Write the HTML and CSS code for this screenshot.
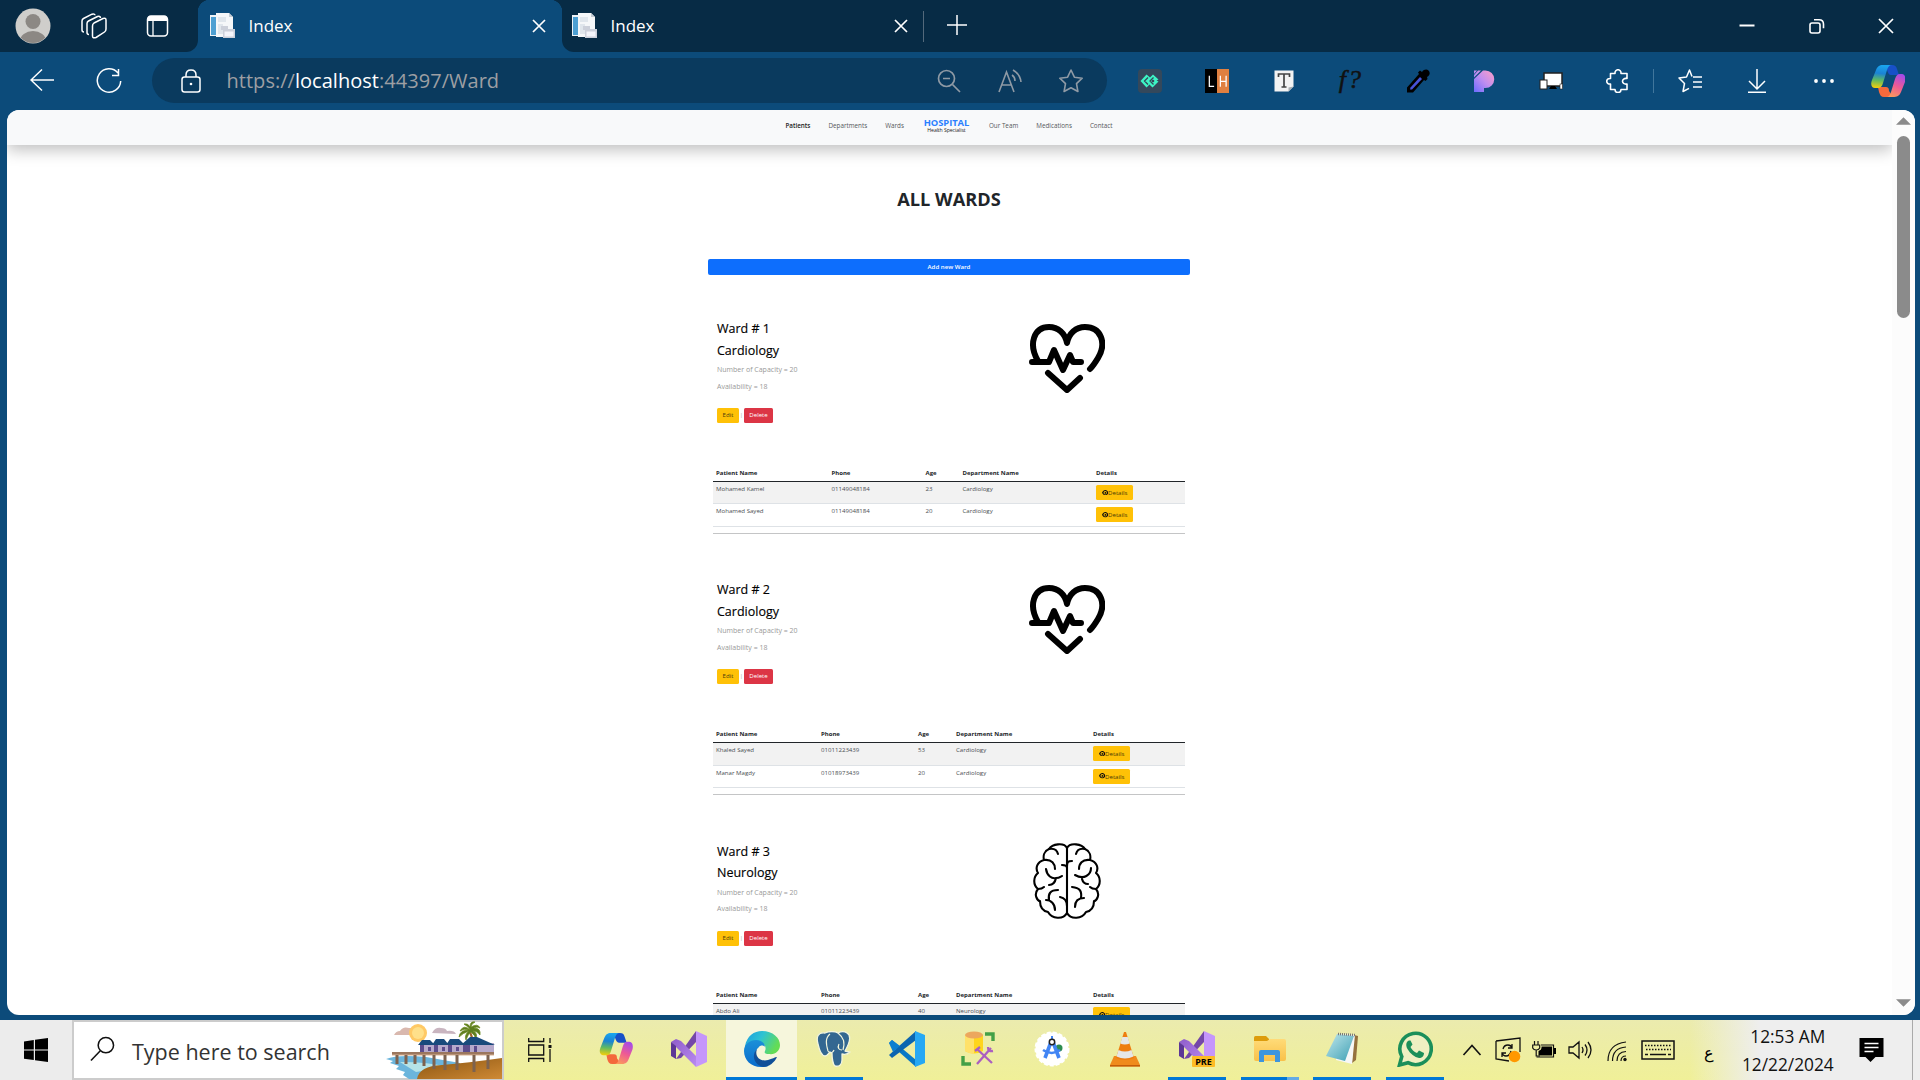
FILE: index.html
```html
<!DOCTYPE html>
<html lang="en">
<head>
<meta charset="utf-8">
<title>Index</title>
<link rel="stylesheet" href="styles.css">
</head>
<body>
<svg class="defs" width="0" height="0">
  <defs>
    <linearGradient id="g-cop1" x1="0.3" y1="0" x2="0.2" y2="1"><stop offset="0" stop-color="#1aa5ee"/><stop offset=".35" stop-color="#1b83d4"/><stop offset=".65" stop-color="#5fba62"/><stop offset="1" stop-color="#f7d008"/></linearGradient>
    <linearGradient id="g-cop2" x1="0.7" y1="0" x2="0.3" y2="1"><stop offset="0" stop-color="#a64be8"/><stop offset=".5" stop-color="#ee5a94"/><stop offset="1" stop-color="#fb9a5c"/></linearGradient>
    <linearGradient id="g-edge1" x1="0" y1="0" x2="1" y2=".4"><stop offset="0" stop-color="#1b9de0"/><stop offset=".5" stop-color="#2fc3d2"/><stop offset="1" stop-color="#64dc55"/></linearGradient>
    <linearGradient id="g-edge2" x1="0" y1="0" x2="0" y2="1"><stop offset="0" stop-color="#1b90d8"/><stop offset="1" stop-color="#0a6ccc"/></linearGradient>
    <linearGradient id="g-pik" x1="1" y1="0" x2="0" y2="1"><stop offset="0" stop-color="#ff9fc4"/><stop offset=".5" stop-color="#c08ef0"/><stop offset="1" stop-color="#6c6cff"/></linearGradient>
    <linearGradient id="g-note" x1="0" y1="0" x2="1" y2="1"><stop offset="0" stop-color="#c2e8ec"/><stop offset="1" stop-color="#3c9fb4"/></linearGradient>
    <linearGradient id="g-folder" x1="0" y1="0" x2="0" y2="1"><stop offset="0" stop-color="#ffdb78"/><stop offset="1" stop-color="#f9c14a"/></linearGradient>
    <linearGradient id="g-sand" x1="0" y1="0" x2="1" y2="1"><stop offset="0" stop-color="#8a5410"/><stop offset="1" stop-color="#cf8a35"/></linearGradient>
    <linearGradient id="g-vs" x1="0" y1="0" x2="1" y2="1"><stop offset="0" stop-color="#8e5cc9"/><stop offset="1" stop-color="#b98af0"/></linearGradient>
    <symbol id="favicon" viewBox="0 0 26 26">
      <path d="M1 2h9v21H1z" fill="#eef3f7"/><path d="M2 4h5v18H2z" fill="#4d9fd2"/>
      <path d="M7 0h13l4 4v20H7z" fill="#f5f7f9"/><path d="M20 0v4h4z" fill="#c4ccd4"/>
      <path d="M9 4h8v5H9zM9 11h5v10H9z" fill="#e0e6ec"/>
      <path d="M12 13h7v4h-7zM14 16h12v9H14z" fill="#ccd0da"/><path d="M15.500 18.500h9v5h-9z" fill="#f4f5fb"/>
    </symbol>
    <symbol id="x" viewBox="0 0 14 14"><path d="M1 1l12 12M13 1L1 13" stroke="#fff" stroke-width="1.700" fill="none"/></symbol>
    <symbol id="copilot" viewBox="0 0 34 32">
      <path d="M12 0h9c3 0 4 1 5 4l2 6h-8c-2 0-3-2-4-5z" fill="#1850c8"/>
      <path d="M22 32h-9c-3 0-4-2-5-5l-1-5h8c2 0 3 1 3 4z" fill="#f4693c"/>
      <path d="M12 0h9c-3 0-4 2-5 5l-4 13c-1 4-3 5-5 5H4c-3 0-5-3-3-8l4-10C6.500 1.500 8 0 12 0z" fill="url(#g-cop1)"/>
      <path d="M22 32h-7c3 0 4-2 5-5l4-13c1-3 2-5 5-5h2c3 0 4 4 3 8l-4 10c-1.500 4-4 5-8 5z" fill="url(#g-cop2)"/>
    </symbol>
    <symbol id="vs" viewBox="0 0 36 36">
      <path d="M5 28L25 0v11L10 27z" fill="#7447a8"/>
      <path d="M0 11l5-3 5 2 15 15v11l-9-9z" fill="url(#g-vs)"/>
      <path d="M0 11v14l5 3V15z" fill="#5d3796"/>
      <path d="M25 0l11 5v26l-11 5z" fill="#c596fb"/>
    </symbol>
    <symbol id="heart" viewBox="0 0 76 69">
      <g fill="none" stroke="#000" stroke-width="6" stroke-linecap="round" stroke-linejoin="round">
        <path d="M9 37C-1 20 5 3 20 3c9 0 16 6 18 16C40 9 47 3 56 3c16 0 22 16 13 31-3 5-5 8-8 11"/>
        <path d="M3 38h17l5-12 9 20 7-15 3 7h8"/><path d="M19 49l19 17 13-12"/>
      </g>
    </symbol>
    <symbol id="brain" viewBox="0 0 68 76">
      <g fill="none" stroke="#000" stroke-width="2.100" stroke-linecap="round" stroke-linejoin="round">
        <path d="M34 4v66"/>
        <g id="lobe"><path d="M34 5C31-1 19 1 16 6c-5 2-6 7-5 11C4 19 2 25 5 30c-5 4-5 12 0 16-5 6 0 12 2 12 0 6 3 10 8 11 4 7 15 8 19 1"/>
        <path d="M16 6c5-1 8 1 9 5M11 17c8-1 11 4 11 9M5 46c3 0 5-1 6-2"/></g>
        <use href="#lobe" transform="matrix(-1 0 0 1 68 0)"/>
        <path d="M13 26c1 7 6 10 10 9 4 0 5-2 6-2M23 35c-1 5-3 7-7 7M29 22c3 0 5 1 5 3M25 47c-8 0-10 4-9 10M13 57c5 0 9 4 9 10M27 54c5 1 7 5 7 9"/>
        <path d="M34 23c0-4 1-5 5-5M42 32c9 5 16 0 16-7M49 36c1 4 3 5 6 5M39 44c8 1 10 4 9 11M51 55c-6 0-9 3-9 9"/>
      </g>
    </symbol>
    <symbol id="eye" viewBox="0 0 12 10"><path d="M0 5C3-1.500 9-1.500 12 5 9 11.500 3 11.500 0 5z" fill="#111"/><circle cx="6" cy="5" r="3.200" fill="#ffc107"/><circle cx="6.300" cy="5.300" r="1.700" fill="#111"/></symbol>
  </defs>
</svg>

<div class="screen">
  <header class="tabstrip">
    <div class="strip-left">
      <svg class="ic-user" viewBox="0 0 36 36"><clipPath id="uc"><circle cx="18" cy="18" r="17"/></clipPath><circle cx="18" cy="18" r="17.500" fill="#cfcecb"/><g fill="#8c8884" clip-path="url(#uc)"><circle cx="18" cy="13.500" r="7.500"/><ellipse cx="18" cy="33" rx="13" ry="10"/></g></svg>
      <svg class="ic-work" viewBox="0 0 26 26" fill="none" stroke="#fff" stroke-width="1.500" stroke-linejoin="round"><path d="M13 10l9-4.500q3-1 3 1.500v9q0 2-1.500 3L15 24.500q-3.500 1.200-3.500-1.500V13q0-2 1.500-3z"/><path d="M8 21.500c-1.500 0-2-1-2-2v-9c0-1.500.5-2 1.500-2.500l9-4.500c1.500-.5 3 0 3 1.500"/><path d="M3 19c-1.500 0-2-1-2-2V8c0-1.500.5-2 1.500-2.500L11 1.200c1.500-.5 3 0 3 1"/></svg>
      <svg class="ic-vert" viewBox="0 0 22 22"><rect x="1" y="1" width="20" height="20" rx="3.500" fill="none" stroke="#fff" stroke-width="1.500"/><path d="M1 6V4q0-3 3-3h14q3 0 3 3v2z" fill="#fff"/><path d="M6.500 6v15" stroke="#fff" stroke-width="1.300"/></svg>
    </div>
    <div class="tab active"><svg class="fav"><use href="#favicon"/></svg><span>Index</span><svg class="close"><use href="#x"/></svg></div>
    <div class="tab second"><svg class="fav"><use href="#favicon"/></svg><span>Index</span><svg class="close"><use href="#x"/></svg></div>
    <div class="tab-end"></div>
    <svg class="plus" viewBox="0 0 22 22"><path d="M11 1v20M1 11h20" stroke="#fff" stroke-width="1.500"/></svg>
    <div class="win">
      <svg viewBox="0 0 16 16"><path d="M.5 7.500h15" stroke="#fff" stroke-width="2"/></svg>
      <svg viewBox="0 0 16 16" fill="none" stroke="#fff" stroke-width="1.600"><rect x="1" y="5" width="10" height="10" rx="2"/><path d="M5 1.800h5q4.500 0 4.500 4.500v4"/></svg>
      <svg viewBox="0 0 16 16"><path d="M1 1l14 14M15 1L1 15" stroke="#fff" stroke-width="1.700"/></svg>
    </div>
  </header>

  <div class="toolbar">
    <svg class="back" viewBox="0 0 24 24" fill="none" stroke="#fff" stroke-width="1.500"><path d="M24 12H1M12 1.500L1 12l11 10.500"/></svg>
    <svg class="reload" viewBox="0 0 26 26" fill="none" stroke="#fff" stroke-width="1.500"><path d="M22 5A11.700 11.700 0 1 0 24.700 13M22.500 1v6.500H16"/></svg>
    <div class="address">
      <svg class="lock" viewBox="0 0 20 24" fill="none" stroke="#fff" stroke-width="1.500"><rect x="1" y="8" width="18" height="15" rx="2.500"/><path d="M5 8V6q0-5 5-5t5 5v2"/><circle cx="10" cy="15" r="1.300" fill="#fff" stroke="none"/></svg>
      <span class="url">https://<b>localhost</b>:44397/Ward</span>
      <div class="addr-icons">
        <svg viewBox="0 0 24 24" fill="none" stroke="#8f9aa5" stroke-width="1.700"><circle cx="9.500" cy="9.500" r="8"/><path d="M15.500 15.500L23 23M6 9.500h7"/></svg>
        <svg viewBox="0 0 24 24" fill="none" stroke="#8f9aa5" stroke-width="1.600"><path d="M1 23L8.500 3 16 23M3.800 16h9.500M14 6q3 2 3 6M15 1q7 4 8 12"/></svg>
        <svg viewBox="0 0 24 24" fill="none" stroke="#8f9aa5" stroke-width="1.600" stroke-linejoin="round"><path d="M12 1l3.400 7.200 7.800 1-5.700 5.500 1.400 7.800-6.900-3.800-6.900 3.800 1.400-7.800L.8 9.200l7.800-1z"/></svg>
      </div>
    </div>
    <div class="ext">
      <svg viewBox="0 0 24 24"><rect width="24" height="24" rx="4" fill="#34485b"/><path d="M8.500 5.500L2.500 12l6 6.500 3-3 3 3 6-6-2-1 2-1-5.500-5-3 3z" fill="#3df5c5"/><path d="M10 8.500L6.500 12l3.500 3.500M15.500 8.500L12 12l3.500 3.500" fill="none" stroke="#34485b" stroke-width="1.300"/><circle cx="15" cy="12" r="1.300" fill="#34485b"/></svg>
      <svg viewBox="0 0 25 25"><path d="M0 0h12.500v25H0z"/><path d="M12.500 0H25v25H12.500z" fill="#e08040"/><path d="M4.500 7v11h5M16 7v11.500M22 7v11.500M16 13h6" fill="none" stroke="#fff" stroke-width="1.300"/></svg>
      <svg viewBox="0 0 24 24"><path d="M2.500 1.500h19v16l-5 5h-14z" fill="#f3f3f3"/><path d="M16.500 22.500v-4l5-1z" fill="#a8adb2"/><path d="M6.500 8V5h11v3M12 5v13M9.500 18h5" fill="none" stroke="#444" stroke-width="1.700"/></svg>
      <span class="fq">f?</span>
      <svg viewBox="0 0 24 24"><path d="M1 23.500v-5L13 5l-1-1.500 2-2 2 1.500c2-3 5-3 6.500-1.500 2 2 1.500 5-1.500 6.500l.5 2-2 2-1.500-1L7 23.500z"/><path d="M4 20.500l.5-2L14 8l2 2L6 20.500z" fill="#4753d8"/></svg>
      <svg viewBox="0 0 24 24"><path d="M2 10L11 1.500h2.500a8.500 8.500 0 0 1 0 17.500H12v4H2zM2 1.500h3L2 5zM6 1.500h3L2 8.500V6z" fill="url(#g-pik)"/></svg>
      <svg viewBox="0 0 24 24"><rect x="5" y="4" width="18" height="13" fill="#fff" stroke="#222" stroke-width="1.500"/><path d="M12 17h4l2 3h-8z"/><rect x="1" y="11" width="7" height="9" fill="#fff" stroke="#222"/><rect x="21" y="15" width="2.500" height="5" fill="#fff" stroke="#222" stroke-width=".6"/></svg>
      <svg viewBox="0 0 24 24" fill="none" stroke="#fff" stroke-width="1.600" stroke-linejoin="round"><path d="M4.500 4.500H9c-.5-5 6.500-5 6 0h6v5c-6-1-6 6.500 0 5.500v5.500h-6c0 4-6 4-6 0H4.500v-5.500c-5 .5-5-6 0-5.500z"/></svg>
    </div>
    <div class="sep"></div>
    <div class="ext ext2">
      <svg viewBox="0 0 24 24" fill="none" stroke="#fff" stroke-width="1.500" stroke-linejoin="round"><path d="M14 7.500L11.500 1 8.500 8 1 9l5.500 5.500L5 22.500l6-3.200M15 8h9M15 13h9M15 18h9"/></svg>
      <svg viewBox="0 0 24 24" fill="none" stroke="#fff" stroke-width="1.500"><path d="M12 0v19M4 12l8 8 8-8M3 23.200h18"/></svg>
      <svg viewBox="0 0 24 24" fill="#fff"><circle cx="4" cy="12" r="1.900"/><circle cx="12" cy="12" r="1.900"/><circle cx="20" cy="12" r="1.900"/></svg>
    </div>
    <svg class="cop" viewBox="0 0 34 38"><use href="#copilot" width="34" height="38" preserveAspectRatio="none"/></svg>
  </div>

  <div class="viewport">
    <main class="page">
      <nav class="nav">
        <a class="on">Patients</a><a>Departments</a><a>Wards</a>
        <div class="brand"><strong>HOSPITAL</strong><small>Health Specialist</small></div>
        <a>Our Team</a><a>Medications</a><a>Contact</a>
      </nav>
      <h1>ALL WARDS</h1>
      <div class="container">
        <a class="add">Add new Ward</a>
        <section class="ward">
          <div class="info">
            <div class="desc"><h2>Ward # 1</h2><h2>Cardiology</h2><p>Number of Capacity = 20</p><p>Availability = 18</p>
              <div class="acts"><a class="btn edit">Edit</a><i>|</i><a class="btn del">Delete</a></div></div>
            <svg class="heart"><use href="#heart"/></svg>
          </div>
          <table class="first">
            <thead><tr><th class="c1">Patient Name</th><th class="c2">Phone</th><th class="c3">Age</th><th class="c4">Department Name</th><th>Details</th></tr></thead>
            <tbody>
              <tr><td>Mohamed Kamel</td><td>01149048184</td><td>23</td><td>Cardiology</td><td><a class="btn det"><svg><use href="#eye"/></svg>Details</a></td></tr>
              <tr><td>Mohamed Sayed</td><td>01149048184</td><td>20</td><td>Cardiology</td><td><a class="btn det"><svg><use href="#eye"/></svg>Details</a></td></tr>
            </tbody>
          </table>
          <hr>
        </section>
        <section class="ward">
          <div class="info">
            <div class="desc"><h2>Ward # 2</h2><h2>Cardiology</h2><p>Number of Capacity = 20</p><p>Availability = 18</p>
              <div class="acts"><a class="btn edit">Edit</a><i>|</i><a class="btn del">Delete</a></div></div>
            <svg class="heart"><use href="#heart"/></svg>
          </div>
          <table>
            <thead><tr><th class="c1">Patient Name</th><th class="c2">Phone</th><th class="c3">Age</th><th class="c4">Department Name</th><th>Details</th></tr></thead>
            <tbody>
              <tr><td>Khaled Sayed</td><td>01011223439</td><td>53</td><td>Cardiology</td><td><a class="btn det"><svg><use href="#eye"/></svg>Details</a></td></tr>
              <tr><td>Manar Magdy</td><td>01018973439</td><td>20</td><td>Cardiology</td><td><a class="btn det"><svg><use href="#eye"/></svg>Details</a></td></tr>
            </tbody>
          </table>
          <hr>
        </section>
        <section class="ward">
          <div class="info">
            <div class="desc"><h2>Ward # 3</h2><h2>Neurology</h2><p>Number of Capacity = 20</p><p>Availability = 18</p>
              <div class="acts"><a class="btn edit">Edit</a><i>|</i><a class="btn del">Delete</a></div></div>
            <svg class="brain"><use href="#brain"/></svg>
          </div>
          <table>
            <thead><tr><th class="c1">Patient Name</th><th class="c2">Phone</th><th class="c3">Age</th><th class="c4">Department Name</th><th>Details</th></tr></thead>
            <tbody>
              <tr><td>Abdo Ali</td><td>01011223439</td><td>40</td><td>Neurology</td><td><a class="btn det"><svg><use href="#eye"/></svg>Details</a></td></tr>
            </tbody>
          </table>
        </section>
      </div>
    </main>
    <div class="scroll">
      <svg viewBox="0 0 16 8"><path d="M8 0l8 8H0z" fill="#8b8b8b"/></svg>
      <div class="thumb"></div>
      <svg class="down" viewBox="0 0 16 8"><path d="M8 8l8-8H0z" fill="#8b8b8b"/></svg>
    </div>
  </div>

  <footer class="taskbar">
    <div class="start"><svg viewBox="0 0 24 24"><path d="M0 3.500L9.800 2v9.500H0zM11 1.800L24 0v11.500H11zM0 12.600h9.800V22L0 20.700zM11 12.600h13V24l-13-1.800z"/></svg></div>
    <div class="search">
      <svg class="mag" viewBox="0 0 26 26" fill="none" stroke="#111" stroke-width="1.600"><circle cx="16.500" cy="9" r="8"/><path d="M10.500 15L1 25"/></svg>
      <span>Type here to search</span>
      <svg class="beach" viewBox="0 0 116 58">
        <path d="M8 14q2-4 6-4 3-5 9-3 6-1 7 7z" fill="#d9b8ae"/><path d="M46 12q3-6 9-5 5 0 6 3 7-1 9 3z" fill="#c9b5c0"/>
        <circle cx="32" cy="12" r="9" fill="#ffc965"/><circle cx="32" cy="12" r="6" fill="#ffe08a"/>
        <path d="M82 10q4 6 3 14l3 0q0-8-4-15z" fill="#9a6428"/>
        <path d="M84 9q-6-6-10 1 5-3 8-1-8 0-9 7 4-4 10-6-5 4-3 9 2-6 5-8 4 3 5 7 2-6-3-8 4 0 7 4 1-7-6-7 3-2 6 0-2-5-9-1 0-3 4-5-5-1-5 5-2-4-6-3 4 2 6 6z" fill="#5d7d1e" stroke="#6c8a22" stroke-width=".8"/>
        <path d="M0 38q12-5 40-2l34 6v16H23l-6-4 2-3-9-3 3-3-9-3 3-2z" fill="#6bb5dc"/><path d="M14 41q30 0 46 5l-30 5z" fill="#b5e3e8"/>
        <path d="M31 58q2-13 25-14 25-2 60-7v21z" fill="url(#g-sand)"/>
        <path d="M34 31v-7h15v7zM48 31v-7h15v7zM62 31v-7h16v7zM77 33V22h31v11z" fill="#b6a9cb"/>
        <path d="M34 31v-7h4v7zM48 31v-7h4v7zM62 31v-7h4v7zM77 33V24h7v9zM42 26h3v4h-3zM56 26h3v4h-3zM70 26h3v4h-3zM88 25h3v6h-3z" fill="#5c4c8c"/>
        <path d="M32 24l4-5h8l5 5zM46 24l4-6h8l5 6zM60 24l4-6h9l6 6zM75 24l9-8h7l18 8z" fill="#184a7c"/>
        <path d="M6 31h102v3H6z" fill="#9b775e"/><path d="M6 34h102" stroke="#d9b292"/>
        <path d="M11 34v9M20 34v9M29 34v9M38 34v11M48 34v14M59 34v15M71 34v15M88 34v17M102 34v14" stroke="#7d624f" stroke-width="3"/>
      </svg>
    </div>
    <div class="tview"><svg viewBox="0 0 24 24" fill="none" stroke="#111" stroke-width="1.300"><path d="M.7 0v3.500h15V0M.7 24v-3.500h15V24M.7 7h15v10H.7zM22 0v5M22 11v13"/><path d="M22 7v3" stroke-width="3"/></svg></div>
    <div class="apps">
      <div class="app"><svg class="i34"><use href="#copilot"/></svg></div>
      <div class="app"><svg class="i36"><use href="#vs"/></svg></div>
      <div class="app cur"><svg class="i36" viewBox="0 0 36 36"><path d="M1 15C3 5 10 0 18 0c11 0 18 7 18 14 0 6-5 10-11 9-4 0-5-1-4-3 2-4-1-9-8-9C7 11 2 15 1 20z" fill="url(#g-edge1)"/><path d="M0 20C0 13 6 9 12 9c5 0 9 3 9 7-1-2-5-2-6 0-8 6-3 20 9 19-2 1-5 1-7 1C7 36 0 29 0 20z" fill="url(#g-edge2)"/><path d="M13 18c-3 8 4 13 11 11 4-1 7-3 9-3-2 5-8 10-14 10-9-2-12-12-6-18z" fill="#104f98"/></svg></div>
      <div class="app run"><svg class="i36" viewBox="0 0 36 36" fill="#336791" stroke="#f2f5dd" stroke-width="1.300" stroke-linejoin="round"><path d="M9 2C2 1 0 6 2 13c2 9 4 12 7 12 2 0 4-3 5-4l2 1c0 5 1 12 3 13 4 1 7-1 7-6v-6c4 1 6 0 8-2-2-1-4 0-5-1C33 13 36 5 31 2c-3-2-7-1-9 0-3-2-9-2-13 0z"/><path d="M14 3c-5 4-4 10-2 17M22 2c6 5 7 9 5 17M12 20c2 3 5 2 6-1M26 19c-3 0-5-2-3-6" fill="none" stroke-width="1.200"/></svg></div>
      <div class="app"><svg class="i36" viewBox="0 0 36 36"><path d="M0 12l3-3 24 20v7z" fill="#0878c6"/><path d="M0 24l3 3L27 9V0z" fill="#0b65b0"/><path d="M0 12l3-3 8 6-7 6z" fill="#0c7fd0"/><path d="M26 0l10 4v28l-10 4z" fill="#26a8f4"/></svg></div>
      <div class="app"><svg class="i36" viewBox="0 0 36 36"><path d="M4 4v16q9 5 18 0V4z" fill="#ffd51c"/><path d="M4 4v16q4 3 9 3V4z" fill="#ffe16a"/><ellipse cx="13" cy="4" rx="9" ry="3.500" fill="#eca75e"/><path d="M24 3h8v7M2 25v8h8" fill="none" stroke="#43a047" stroke-width="3.400"/><path d="M16 18l15 14M30 17L16 33" stroke="#ab5fc0" stroke-width="2.300"/><path d="M14 20l5-4M27 16q0 5 5 4" stroke="#ab5fc0" stroke-width="2.300" fill="none"/></svg></div>
      <div class="app"><svg class="i36" viewBox="0 0 36 36"><circle cx="18" cy="18" r="16.500" fill="#fff" stroke="#fff" stroke-width="2" stroke-dasharray="4 2"/><circle cx="25" cy="17" r="3.500" fill="#2d8c50"/><path d="M17 5h2v5h-2z" fill="#4285f4"/><path d="M17 11l-6 16M19 11l6 16" stroke="#4285f4" stroke-width="3.600"/><path d="M9 19q9 6 17 0" fill="none" stroke="#4285f4" stroke-width="2.500"/><circle cx="18" cy="11" r="2.700" fill="#fff" stroke="#222" stroke-width="1.500"/></svg></div>
      <div class="app"><svg class="i36" viewBox="0 0 36 36"><path d="M7 25h22l4 9v1.500H3V34z" fill="#f08a1c"/><path d="M3 34h30v1.500H3z" fill="#c55c08"/><path d="M17 1h2l8 26q-9 4-18 0z" fill="#ee7d10"/><path d="M15.300 6h5.400l2 6.500q-5 2-9.400 0zM11.500 19q6.500 3 13 0l2 6.500q-8.500 4-17 0z" fill="#e6e6e6"/></svg></div>
      <div class="app run"><svg class="i36" viewBox="0 0 36 36"><use href="#vs"/><rect x="13" y="25" width="23" height="11" rx="1" fill="#fdbb24"/><text x="24.500" y="33.700" text-anchor="middle" class="pre">PRE</text></svg></div>
      <div class="app run multi"><svg class="i36" viewBox="0 0 36 36"><path d="M2 6.500Q2 5 3.500 5H14l3 3v4H2z" fill="#dd9c0c"/><path d="M2 10h13l3-2h14q2 0 2 2v18q0 2-2 2H4q-2 0-2-2z" fill="url(#g-folder)"/><path d="M7 31V21q0-2 2-2h17q2 0 2 2v10h-5v-7H12v7z" fill="#3d95dd"/></svg></div>
      <div class="app run"><svg class="i36" viewBox="0 0 36 36"><path d="M30 4l4 1-2 24-4 3z" fill="#95713e"/><path d="M13 3l18 1-3 29-16-4z" fill="#f7f7f7"/><path d="M13 3l17 2-9 25-19-5z" fill="url(#g-note)"/><path d="M14 3l17 1" stroke="#777" stroke-width="2.500" stroke-dasharray="1 1"/></svg></div>
      <div class="app run"><svg class="i36" viewBox="0 0 36 36"><path d="M2.500 34l2.300-8.500A15.700 15.700 0 1 1 11 31.700z" fill="#eff0c2" stroke="#1b8f5a" stroke-width="3.600"/><path d="M12 9.500c-3 1-3.500 5-1.500 8.500 3 5 7 8 11.500 9 3 0 5-2 5-5l-5-2.500-2 2.500c-3-1-5.500-3.500-6.500-6l2-2.500-2-4z" fill="#1b8f5a"/></svg></div>
    </div>
    <div class="tray">
      <svg viewBox="0 0 24 24" class="t1" fill="none" stroke="#111" stroke-width="1.600"><path d="M3.500 17L12 7.500 20.500 17"/></svg>
      <svg viewBox="0 0 26 26" class="t2" fill="none" stroke="#111" stroke-width="1.300"><path d="M1 4l24-3v14M1 4v18l13 2"/><path d="M8 12q1-4 5-4 3 0 4 3M17 7v4h-4M16 14q-1 5-5 5-3 0-4-3M7 20v-4h4"/><circle cx="19.500" cy="19.500" r="5.800" fill="#ff9800" stroke="none"/></svg>
      <svg viewBox="0 0 24 24" class="t3"><path d="M2.500 3v4M6 3v4M.7 7h7v3q-1 2-3.500 2T.7 10zM4.200 12v6H8" fill="none" stroke="#111" stroke-width="1.200"/><path d="M9 7h12.500v12H4.500" fill="none" stroke="#111" stroke-width="1.200"/><path d="M9.500 8.500H20v9H6.500V13q3-1 3-3zM22 10h2v6h-2z"/></svg>
      <svg viewBox="0 0 24 24" class="t4" fill="none" stroke="#111" stroke-width="1.300"><path d="M1 9h4l6-5v16l-6-5H1zM14 9q2 3 0 6M17 6.500q4 5.500 0 11M20 4q6 8 0 16"/></svg>
      <svg viewBox="0 0 24 24" class="t5" fill="none" stroke="#111" stroke-width="1.200"><path d="M3 23Q3 6 21 4M7.500 23q0-13 13.500-14M12 23q0-9 9-9.500M16 23q0-5 5-5"/><circle cx="20" cy="21.500" r="1.700" fill="#111" stroke="none"/></svg>
      <svg viewBox="0 0 34 20" class="t6" fill="none" stroke="#111" stroke-width="1.500"><rect x="1" y="1" width="32" height="18"/><path d="M4 5.500h26M5 9.500h25" stroke-dasharray="1.500 1.500"/><path d="M4 14.500h3M9 14.500h16M27 14.500h3"/></svg>
      <span class="lang">ع</span>
      <div class="clock"><span>12:53 AM</span><span>12/22/2024</span></div>
      <svg viewBox="0 0 24 24" class="t7"><path d="M0 0h24v19h-8l-5 5-5-5H0z"/><path d="M5 5.500h14M5 9.500h14M5 13.500h9" stroke="#fff" stroke-width="1.400"/></svg>
    </div>
  </footer>
</div>
</body>
</html>
```
FILE: styles.css
```css
* { box-sizing: border-box; }
html, body { margin: 0; height: 100%; overflow: hidden; }
body { font-family: "Open Sans", "Noto Sans", sans-serif; }
svg { display: block; flex: none; }
.defs { position: absolute; }
.screen { width: 1920px; height: 1080px; display: flex; flex-direction: column; background: #0c4b7a; }

/* tab strip */
.tabstrip { height: 52px; display: flex; align-items: stretch; background: linear-gradient(90deg, #0c4b7a 600px, #072b45 600px); color: #fff; flex: none; }
.strip-left { width: 198px; display: flex; align-items: center; padding-left: 15px; border-bottom-right-radius: 12px; background: #072b45; }
.ic-user { width: 36px; height: 36px; }
.ic-work { width: 26px; height: 26px; margin-left: 30px; }
.ic-vert { width: 23px; height: 22px; margin-left: 39px; }
.tab { width: 364px; display: flex; align-items: center; padding: 0 16px 0 11px; font-size: 17px; }
.tab.active { background: radial-gradient(circle at 12px 12px, #0c4b7a 12px, #072b45 12.500px) left top / 12px 12px no-repeat, radial-gradient(circle at 0 12px, #0c4b7a 12px, #072b45 12.500px) right top / 12px 12px no-repeat; }
.tab .fav { width: 26px; height: 26px; }
.tab span { flex: 1; padding: 0 0 2px 13.500px; }
.tab .close { width: 14px; height: 14px; }
.tab.second { width: 361px; padding: 0 15px 0 9px; border-bottom-left-radius: 12px; background: #072b45; }
.tab-end { width: 1px; height: 31px; align-self: center; background: #53697b; }
.plus { width: 22px; height: 22px; align-self: center; margin: 0 0 2px 22px; }
.win { margin-left: auto; display: flex; align-items: center; gap: 53.500px; padding: 0 26px 1px 0; }
.win svg { width: 16px; height: 16px; }

/* toolbar */
.toolbar { height: 58px; display: flex; align-items: center; flex: none; padding-bottom: 1px; }
.back { width: 24px; height: 24px; margin: 0 0 1px 30px; }
.reload { width: 26px; height: 26px; margin-left: 42px; }
.address { width: 955px; height: 45px; margin-left: 30px; border-radius: 23px; background: #0a3a5e; display: flex; align-items: center; padding: 0 24.500px 0 29px; }
.lock { width: 20px; height: 24px; }
.url { margin-left: 25.500px; padding-bottom: 1px; font-size: 20px; letter-spacing: .03px; color: #9d9fa3; white-space: nowrap; }
.url b { font-weight: 400; color: #fff; }
.addr-icons { margin-left: auto; display: flex; gap: 37px; }
.addr-icons svg { width: 24px; height: 24px; }
.ext { display: flex; gap: 42.900px; margin-left: 31px; align-items: center; }
.ext svg, .ext .fq { width: 24px; height: 24px; }
.fq { font: italic 26px/22px "Liberation Serif", serif; color: #111; white-space: nowrap; letter-spacing: 2px; -webkit-text-stroke: .5px #111; }
.sep { width: 1px; height: 24px; background: #41769c; margin-left: 23px; }
.ext2 { margin-left: 24px; }
.cop { width: 34px; height: 38px; margin-left: 35px; }

/* page */
.viewport { width: 1908px; height: 905px; margin-left: 7px; background: #fff; border-radius: 12px; overflow: hidden; display: flex; flex: none; }
.page { width: 1885px; overflow: hidden; }
.nav { height: 35px; background: #f8f9fa; box-shadow: 0 5px 16px rgba(0,0,0,.25); display: flex; justify-content: center; align-items: center; gap: 18px; font-size: 6.300px; padding: 0 1px 4px 0; color: #55585b; }
.nav .on { color: #222; font-weight: 600; }
.brand { display: flex; flex-direction: column; align-items: center; margin: 1px 2px 0; width: 45px; white-space: nowrap; }
.brand strong { font-size: 9.400px; line-height: 9px; color: #2b7fff; letter-spacing: -.08px; }
.brand small { font-size: 5.200px; line-height: 7px; color: #222; letter-spacing: -.1px; }
h1 { margin: 42px 1px 0 0; text-align: center; font-size: 18.200px; line-height: 25px; color: #212529; font-weight: 700; }
.container { width: 482px; margin: 47px 0 0 701px; }
.add { display: block; height: 16px; border-radius: 2px; background: #0d6efd; color: #fff; text-align: center; font-size: 6.100px; line-height: 16px; font-weight: 600; margin-bottom: 42px; }
.ward { height: 261.200px; padding: 0 5px; }
.info { display: flex; height: 148px; }
.desc { width: 312px; padding: 1.200px 0 0 4px; }
h2 { margin: 0; font-size: 12.500px; line-height: 21.800px; font-weight: 500; color: #000; -webkit-text-stroke: .14px #000; }
.desc p { margin: 0; padding-top: .4px; font-size: 7px; line-height: 16.200px; color: #999; font-weight: 400; }
.acts { display: flex; align-items: flex-start; margin-top: 13.300px; font-size: 6px; }
.acts i { width: 5px; text-align: center; font-style: normal; color: #aaa; line-height: 14px; }
.btn { height: 15px; border-radius: 1.500px; font-size: 6.100px; line-height: 14px; text-align: center; display: block; }
.edit { width: 22px; background: #ffc107; color: #4d3d0c; }
.del { width: 29px; background: #dc3545; color: #fff; }
.heart { width: 76px; height: 69px; margin: 6.500px 0 0 4px; }
.brain { width: 68px; height: 76px; margin: 4px 0 0 8px; }
table { width: 100%; border-collapse: separate; border-spacing: 0; table-layout: fixed; font-size: 6.100px; }
th { height: 17px; text-align: left; padding: 0 3px; font-size: 6px; font-weight: 700; color: #212529; border-bottom: 1px solid #212529; white-space: nowrap; }
td { height: 22.400px; vertical-align: top; padding: 3px; line-height: 8px; color: #4a4e52; border-bottom: 1px solid #dee2e6; white-space: nowrap; }
.c1 { width: 105px; } .c2 { width: 97px; } .c3 { width: 38px; } .c4 { width: 137px; }
.first .c1 { width: 115.500px; } .first .c2 { width: 94px; } .first .c3 { width: 37px; } .first .c4 { width: 133.500px; }
tbody tr:first-child td { background: #f2f2f2; }
.det { width: 37px; background: #ffc107; color: #4a3a06; display: flex; align-items: center; justify-content: center; line-height: 13px; }
.det svg { width: 6.500px; height: 5.500px; }
hr { margin: 6px 0 0; border: 0; height: 1px; background: #c4c5c6; }
.scroll { width: 23px; background: #fcfcfc; display: flex; flex-direction: column; align-items: center; padding: 7px 0 8px; }
.scroll svg { width: 15px; height: 8px; }
.thumb { width: 13px; height: 182px; border-radius: 7px; background: #8b8b8b; margin-top: 11px; }
.scroll .down { margin-top: auto; }

/* taskbar */
.taskbar { height: 60px; margin-top: 5px; display: flex; flex: none; background: linear-gradient(90deg, #ececec 0, #ececec 500px, rgba(236,236,236,0) 504px, rgba(236,236,236,0) 1690px, #eee 1760px), linear-gradient(#ebebae, #f0f098); }
.start { width: 72px; display: flex; align-items: center; justify-content: center; }
.start svg { width: 24px; height: 24px; }
.search { width: 432px; border: 2px solid #ccc; background: #fff; display: flex; align-items: center; color: #333; }
.mag { width: 25px; height: 26px; margin: 0 0 2px 16px; }
.search span { font-size: 21.500px; margin-left: 17px; padding-top: 2px; white-space: nowrap; width: 254px; }
.beach { width: 116px; height: 58px; }
.tview { width: 76px; display: flex; align-items: center; padding-left: 24px; }
.tview svg { width: 24px; height: 24px; }
.apps { display: flex; }
.app { width: 72.600px; display: flex; align-items: center; justify-content: center; border-bottom: 3px solid transparent; background-clip: padding-box; }
.i34 { width: 34px; height: 31px; }
.i36 { width: 36px; height: 36px; }
.cur { background: #f6f6dc; border-bottom-color: #0078d7; margin: 0 .8px 0 1px; width: 71px; }
.run { background: linear-gradient(#0078d7, #0078d7) center bottom / 58px 3px no-repeat border-box; }
.multi { background: linear-gradient(90deg, #0078d7 46px, #64abe6 46px) center bottom / 58px 3px no-repeat border-box; }
.pre { font: 700 9px "Open Sans", sans-serif; }
.tray { flex: 1; display: flex; align-items: center; margin-right: 7px; border-right: 1px solid #aaa; }
.t1 { width: 24px; height: 24px; margin-left: 8.500px; }
.t2 { width: 26px; height: 26px; margin-left: 11px; }
.t3 { width: 24px; height: 24px; margin-left: 11px; }
.t4 { width: 24px; height: 24px; margin-left: 12px; }
.t5 { width: 24px; height: 24px; margin-left: 13px; }
.t6 { width: 34px; height: 20px; margin-left: 12px; }
.lang { width: 16px; margin-left: 26px; padding-top: 4px; font: 16px "DejaVu Sans", sans-serif; text-align: center; }
.clock { width: 100px; margin-left: 21px; padding-top: 2px; display: flex; flex-direction: column; align-items: center; font-size: 17.300px; line-height: 28px; color: #111; white-space: nowrap; }
.t7 { width: 25px; height: 24px; margin-left: 21px; }
```
